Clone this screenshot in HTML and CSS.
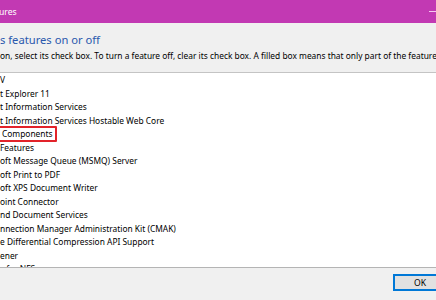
FILE: index.html
```html
<!DOCTYPE html>
<html lang="en">
<head>
  <meta charset="UTF-8" />
  <title>Windows Features</title>
  <link rel="stylesheet" href="styles.css">
</head>
<body>
  <div class="titlebar">
    <span class="title">ures</span>
    <span class="min"></span>
  </div>

  <div class="intro">
    <h1>s features on or off</h1>
    <p>on, select its check box. To turn a feature off, clear its check box. A filled box means that only part of the feature</p>
  </div>

  <div class="feature-list">
    <div class="row">V</div>
    <div class="row">t Explorer 11</div>
    <div class="row">t Information Services</div>
    <div class="row">t Information Services Hostable Web Core</div>
    <div class="row"><span class="mark">Components</span></div>
    <div class="row">Features</div>
    <div class="row">oft Message Queue (MSMQ) Server</div>
    <div class="row">oft Print to PDF</div>
    <div class="row">oft XPS Document Writer</div>
    <div class="row">oint Connector</div>
    <div class="row">nd Document Services</div>
    <div class="row">nnection Manager Administration Kit (CMAK)</div>
    <div class="row">e Differential Compression API Support</div>
    <div class="row">ener</div>
    <div class="row">s for NFS</div>
  </div>

  <div class="footer">
    <button class="ok-btn">OK</button>
  </div>
</body>
</html>
```

FILE: styles.css
```css
* {
  box-sizing: border-box;
}

body {
  margin: 0;
  width: 436px;
  height: 300px;
  overflow: hidden;
  background: #f0f0f0;
  font-family: 'Noto Sans', 'Open Sans', sans-serif;
  font-size: 8.4px;
  color: #000;
}

.titlebar {
  height: 23px;
  background: #c239b3;
  display: flex;
  align-items: center;
  justify-content: space-between;
  color: #fff;
}

.title {
  font-size: 8.6px;
  margin-left: -1px;
}

.min {
  width: 8px;
  height: 1px;
  background: #f6c8f0;
  margin-right: -1px;
}

.intro {
  height: 49px;
  padding-top: 8px;
}

.intro h1 {
  margin: 0;
  font-size: 11.2px;
  font-weight: normal;
  color: #2a58ad;
  line-height: 17px;
}

.intro p {
  margin: 0;
  margin-top: 1px;
  line-height: 14px;
  white-space: nowrap;
  overflow: hidden;
}

.feature-list {
  height: 196px;
  background: #fff;
  border-top: 1px solid #c4c4c4;
  border-bottom: 1px solid #b4b4b4;
  overflow: hidden;
}

.row {
  line-height: 13.5px;
  white-space: nowrap;
}

.mark {
  display: inline-block;
  position: relative;
  padding-left: 2px;
}

/* red annotation box drawn over the row */
.mark::after {
  content: "";
  position: absolute;
  left: -4px;
  right: -4px;
  top: -1.5px;
  bottom: -1.5px;
  border: 2px solid #e2232a;
  border-radius: 1px;
}

.footer {
  height: 32px;
  display: flex;
  justify-content: flex-end;
  align-items: flex-start;
  padding-top: 6px;
}

.ok-btn {
  width: 54px;
  height: 17px;
  margin-right: -11px;
  background: #e1e1e1;
  border: 1px solid #0078d7;
  box-shadow: inset 0 0 0 1px #0078d7;
  font-family: inherit;
  font-size: 8.6px;
  color: #000;
  padding: 0;
}
```
